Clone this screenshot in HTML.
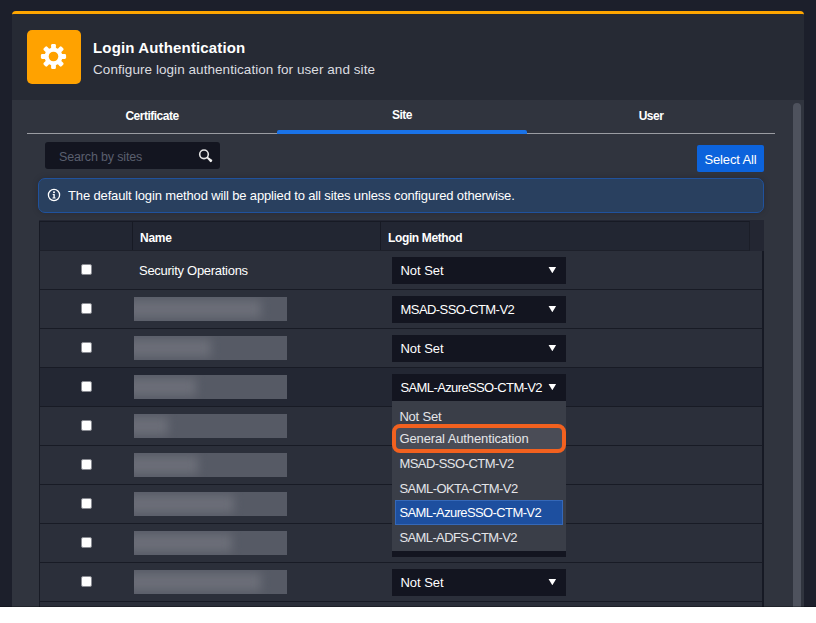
<!DOCTYPE html>
<html><head><meta charset="utf-8">
<style>
*{box-sizing:border-box;margin:0;padding:0}
html,body{width:816px;height:623px;overflow:hidden;background:#fff}
body{font-family:"Liberation Sans",sans-serif;color:#fff;position:relative}
div,span,i{position:absolute}
#bg{left:0;top:0;width:816px;height:607px;background:#1c1f2b;overflow:hidden}
#card{left:12px;top:11px;width:792px;height:620px;background:#30343e;border-top:3px solid #ffa600;border-radius:4px 4px 0 0;overflow:hidden}
#hdr{left:0;top:0;width:792px;height:86px;background:#262a34}
#ico{left:15px;top:16px;width:54px;height:54px;background:#ffa200;border-radius:5px}
#ico svg{position:absolute;left:0;top:0}
#ttl{left:81px;top:25px;font-size:15px;font-weight:bold;white-space:nowrap;letter-spacing:0.15px}
#sub{left:81px;top:48px;font-size:13.5px;color:#dcdde0;white-space:nowrap;letter-spacing:0.06px}
.tab{top:95px;font-size:12px;font-weight:bold;white-space:nowrap;text-align:center;width:250px;letter-spacing:-0.5px}
#tabline{left:15px;top:119px;width:748px;height:1px;background:#9a9ca2}
#tabact{left:265px;top:116px;width:250px;height:4px;background:#1a73e8;border-radius:2px 2px 0 0}
#search{left:33px;top:128px;width:175px;height:27px;background:#131520;border-radius:3px}
#search span{left:14px;top:8px;font-size:12.5px;color:#5a5f6e;white-space:nowrap;letter-spacing:-0.15px}
#search svg{position:absolute;left:152px;top:7px}
#selall{left:685px;top:131.4px;width:67px;height:27px;background:#0c63dc;border-radius:2px;font-size:13px;text-align:center;line-height:29px;white-space:nowrap;letter-spacing:-0.15px}
#info{left:26px;top:164px;width:726px;height:35px;background:#29405f;border:1px solid #20529d;border-radius:7px;box-shadow:0 0 6px rgba(0,0,0,.18)}
#info span{left:29px;top:9px;font-size:13px;white-space:nowrap;letter-spacing:-0.14px}
#info svg{position:absolute;left:7.5px;top:9px}
#tbl{left:27px;top:206px;width:725px;height:420px;background:#232632}
#thead{left:0;top:1px;width:711px;height:30px;background:#222632;border:1px solid #171a24;border-bottom-color:#1d202a;border-right-color:#1b1e28}
#thead b{position:absolute;top:0;width:1px;height:28px;background:#171a24}
.th{top:9px;font-size:12px;font-weight:bold;white-space:nowrap;letter-spacing:-0.25px}
.row{left:0;width:725px;height:39px;border-bottom:1px solid #181b25;border-left:1px solid #181b25;border-right:2px solid #161924;background:#2b2f3a}
.cb{left:41px;top:13px;width:11px;height:11px;background:#fff;border:1px solid #8a8c93;border-radius:2px}
.blur{left:94px;top:7px;width:153px;height:24px;background:#565a65;overflow:hidden}
.blur i{left:-8px;top:3px;height:18px;background:#6b6e78;filter:blur(5px)}
.sel{left:352px;top:6px;width:174px;height:27px;background:#131520}
.sel span{left:8.5px;top:6px;font-size:13px;white-space:nowrap}
.sel i{left:156.4px;top:9.8px;width:7.9px;height:6.4px;background:#fff;clip-path:polygon(0 0,100% 0,50% 100%)}
.nm{left:99px;top:12px;font-size:13px;white-space:nowrap;letter-spacing:-0.28px}
#dd{left:380px;top:387px;width:174px;height:150px;background:#3a3e48}
.opt{left:7.4px;font-size:13px;white-space:nowrap;color:#e4e5e8;letter-spacing:-0.2px}
#hl{left:0;top:23px;width:174px;height:29px;border:4px solid #f2611f;border-radius:8px;background:#4a4c56}
#cur{left:3px;top:98.6px;width:168px;height:25px;background:#1d4f9f;border:1px solid #3568b8}
#sb{left:781px;top:89px;width:8px;height:540px;background:#4e525d;border-radius:4px}
</style></head><body>
<div id="bg">
<div id="card">
 <div id="hdr">
  <div id="ico"><svg width="54" height="54" viewBox="0 0 54 54"><g transform="translate(26.5,26.5)" fill="#fff"><rect x="-2.4" y="-12.6" width="4.8" height="7" rx="1.3" transform="rotate(0)"/><rect x="-2.4" y="-12.6" width="4.8" height="7" rx="1.3" transform="rotate(45)"/><rect x="-2.4" y="-12.6" width="4.8" height="7" rx="1.3" transform="rotate(90)"/><rect x="-2.4" y="-12.6" width="4.8" height="7" rx="1.3" transform="rotate(135)"/><rect x="-2.4" y="-12.6" width="4.8" height="7" rx="1.3" transform="rotate(180)"/><rect x="-2.4" y="-12.6" width="4.8" height="7" rx="1.3" transform="rotate(225)"/><rect x="-2.4" y="-12.6" width="4.8" height="7" rx="1.3" transform="rotate(270)"/><rect x="-2.4" y="-12.6" width="4.8" height="7" rx="1.3" transform="rotate(315)"/><circle r="9"/><circle r="4.8" fill="#ffa200"/></g></svg></div>
  <div id="ttl">Login Authentication</div>
  <div id="sub">Configure login authentication for user and site</div>
 </div>
 <div class="tab" style="left:15px">Certificate</div>
 <div class="tab" style="left:265px;top:94px">Site</div>
 <div class="tab" style="left:514px">User</div>
 <div id="tabline"></div><div id="tabact"></div>
 <div id="search"><span>Search by sites</span><svg width="17" height="16" viewBox="0 0 17 16"><circle cx="7" cy="5.3" r="4.3" fill="none" stroke="#e4e4e4" stroke-width="1.6"/><path d="M9.3 8.6 L10.3 7.4 L15.3 10.9 Q15.6 12.6 13.4 13.3 Z" fill="#efefef"/></svg></div>
 <div id="selall">Select All</div>
 <div id="info"><svg width="14" height="14" viewBox="0 0 14 14"><circle cx="7" cy="7" r="5.6" fill="none" stroke="#fff" stroke-width="1.3"/><circle cx="7" cy="4.2" r="1" fill="#fff"/><path d="M5.7 6.1h2.1v3.3h.8v1H5.5v-1h.9V7.1h-.7z" fill="#fff"/></svg><span>The default login method will be applied to all sites unless configured otherwise.</span></div>
 <div id="tbl">
  <div id="thead"><b style="left:92px"></b><b style="left:340px"></b><div class="th" style="left:100px">Name</div><div class="th" style="left:348px;letter-spacing:-0.37px">Login Method</div></div>
  <div class="row" style="top:31px"><div class="cb"></div><div class="nm">Security Operations</div><div class="sel"><span style="letter-spacing:-0.03px">Not Set</span><i></i></div></div>
  <div class="row" style="top:70px"><div class="cb"></div><div class="blur"><i style="width:135px"></i></div><div class="sel"><span style="letter-spacing:-0.56px">MSAD-SSO-CTM-V2</span><i></i></div></div>
  <div class="row" style="top:109px"><div class="cb"></div><div class="blur"><i style="width:85px"></i></div><div class="sel"><span style="letter-spacing:-0.03px">Not Set</span><i></i></div></div>
  <div class="row" style="top:148px;background:#232733"><div class="cb"></div><div class="blur"><i style="width:70px"></i></div><div class="sel"><span style="letter-spacing:-0.62px">SAML-AzureSSO-CTM-V2</span><i></i></div></div>
  <div class="row" style="top:187px"><div class="cb"></div><div class="blur"><i style="width:42px"></i></div><div class="sel"></div></div>
  <div class="row" style="top:226px"><div class="cb"></div><div class="blur"><i style="width:72px"></i></div><div class="sel"></div></div>
  <div class="row" style="top:265px"><div class="cb"></div><div class="blur"><i style="width:108px"></i></div><div class="sel"></div></div>
  <div class="row" style="top:304px"><div class="cb"></div><div class="blur"><i style="width:106px"></i></div><div class="sel"></div></div>
  <div class="row" style="top:343px"><div class="cb"></div><div class="blur"><i style="width:135px"></i></div><div class="sel"><span style="letter-spacing:-0.03px">Not Set</span><i></i></div></div>
  <div class="row" style="top:382px"><div class="cb"></div><div class="blur"><i style="width:100px"></i></div></div>
 </div>
 <div id="dd">
  <div class="opt" style="top:7.5px">Not Set</div>
  <div id="hl"></div>
  <div class="opt" style="top:29.5px;letter-spacing:-0.11px">General Authentication</div>
  <div class="opt" style="top:54.5px;letter-spacing:-0.52px">MSAD-SSO-CTM-V2</div>
  <div class="opt" style="top:79.5px;letter-spacing:-0.54px">SAML-OKTA-CTM-V2</div>
  <div id="cur"></div>
  <div class="opt" style="top:103.5px;color:#fff;letter-spacing:-0.61px">SAML-AzureSSO-CTM-V2</div>
  <div class="opt" style="top:128.5px;letter-spacing:-0.6px">SAML-ADFS-CTM-V2</div>
 </div>
 <div id="sb"></div>
</div>
<div style="left:0;top:606px;width:816px;height:1px;background:rgba(0,0,0,.3)"></div>
</div>
</body></html>
